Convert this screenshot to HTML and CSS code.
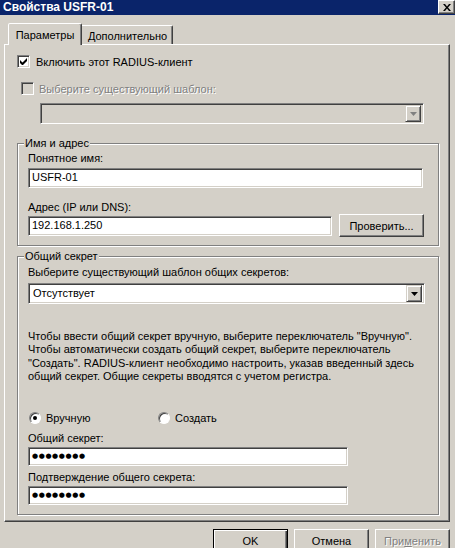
FILE: index.html
```html
<!DOCTYPE html>
<html lang="ru">
<head>
  <meta charset="UTF-8" />
  <title>Свойства USFR-01</title>
  <link rel="stylesheet" href="styles.css">
</head>
<body>
<div class="window">
  <div class="titlebar">
    <span class="title">Свойства USFR-01</span>
    <span class="close-btn">
      <svg width="8" height="7" viewBox="0 0 8 7"><path d="M0 0h2l2 2.5L6 0h2L5 3.5 8 7H6L4 4.5 2 7H0l3-3.5z" fill="#000"/></svg>
    </span>
  </div>
  <div class="content">
    <div class="tabs">
      <div class="tab active">Параметры</div>
      <div class="tab">Дополнительно</div>
    </div>
    <div class="panel">
      <div class="check-row">
        <span class="checkbox">
          <svg width="7" height="7" viewBox="0 0 7 7"><path d="M0 2v3l2 2h1l4-4V0L2.5 4.5z" fill="#000"/></svg>
        </span>
        Включить этот RADIUS-клиент
      </div>
      <div class="check-row disabled indent">
        <span class="checkbox off"></span>
        Выберите существующий шаблон:
      </div>
      <div class="combo combo-off">
        <span class="combo-text"></span>
        <span class="combo-arrow"><svg width="7" height="4" viewBox="0 0 7 4"><path d="M0 0h7L3.5 4z" fill="#808080"/></svg></span>
      </div>

      <div class="group group-name">
        <div class="legend"><span>Имя и адрес</span></div>
        <div class="field-label">Понятное имя:</div>
        <div class="textbox tb-name">USFR-01</div>
        <div class="field-label lbl-addr">Адрес (IP или DNS):</div>
        <div class="addr-row">
          <div class="textbox tb-addr">192.168.1.250</div>
          <div class="btn btn-check">Проверить...</div>
        </div>
      </div>

      <div class="group group-secret">
        <div class="legend"><span>Общий секрет</span></div>
        <div class="field-label">Выберите существующий шаблон общих секретов:</div>
        <div class="combo combo-secret">
          <span class="combo-text">Отсутствует</span>
          <span class="combo-arrow"><svg width="7" height="4" viewBox="0 0 7 4"><path d="M0 0h7L3.5 4z" fill="#000"/></svg></span>
        </div>
        <p class="hint">Чтобы ввести общий секрет вручную, выберите переключатель "Вручную".<br>Чтобы автоматически создать общий секрет, выберите переключатель<br>"Создать". RADIUS-клиент необходимо настроить, указав введенный здесь<br>общий секрет. Общие секреты вводятся с учетом регистра.</p>
        <div class="radio-row">
          <div class="radio-item first"><span class="radio checked"></span>Вручную</div>
          <div class="radio-item"><span class="radio"></span>Создать</div>
        </div>
        <div class="field-label lbl-secret">Общий секрет:</div>
        <div class="textbox tb-pass">●●●●●●●●</div>
        <div class="field-label lbl-confirm">Подтверждение общего секрета:</div>
        <div class="textbox tb-pass">●●●●●●●●</div>
      </div>
    </div>
    <div class="buttons">
      <div class="btn btn-default">OK</div>
      <div class="btn">Отмена</div>
      <div class="btn btn-off">При<u>м</u>енить</div>
    </div>
  </div>
</div>
</body>
</html>
```

FILE: styles.css
```css
:root { --face:#d4d0c8; --shadow:#808080; --dark:#404040; --light:#fff; --title:#0a246a; }
* { box-sizing: border-box; }
body { margin:0; background:var(--face); font-family:'Liberation Sans',Arial,sans-serif; font-size:11px; color:#000; overflow:hidden; }
.window { width:455px; height:548px; }

/* title bar */
.titlebar { height:15px; background:var(--title); display:flex; justify-content:space-between; align-items:flex-start; }
.title { color:#fff; font-weight:bold; font-size:12px; line-height:14px; padding-left:3px; }
.close-btn { width:17px; height:14px; background:var(--face); display:flex; align-items:center; justify-content:center;
  border:1px solid; border-color:var(--light) var(--dark) var(--dark) var(--light); box-shadow:inset -1px -1px var(--shadow); }

.content { padding:8px 5px 0 4px; }

/* tabs */
.tabs { display:flex; height:21px; margin-left:4px; }
.tab { background:var(--face); border:1px solid; border-bottom:none; border-color:var(--light) var(--dark) transparent var(--light);
  box-shadow:inset -1px 0 var(--shadow); border-radius:2px 2px 0 0; text-align:center; line-height:13px; }
.tab.active { width:74px; height:22px; padding-top:5px; position:relative; z-index:1; }
.tab:not(.active) { width:93px; height:19px; margin-top:2px; margin-left:-2px; padding-top:4px; padding-left:2px; }

/* panel */
.panel { width:446px; height:478px; padding:10px 0 0 12px; border:1px solid; border-color:var(--light) var(--dark) var(--dark) var(--light);
  box-shadow:inset -1px -1px var(--shadow); }

.check-row { display:flex; align-items:center; gap:6px; height:13px; white-space:nowrap; }
.check-row.indent { margin-top:14px; padding-left:4px; gap:5px; }
.check-row.disabled { color:var(--shadow); text-shadow:1px 1px var(--light); }
.checkbox { width:13px; height:13px; flex:none; background:#fff; display:flex; align-items:center; justify-content:center;
  border:1px solid; border-color:var(--shadow) var(--light) var(--light) var(--shadow); box-shadow:inset 1px 1px var(--dark), inset -1px -1px var(--face); }
.checkbox.off { background:var(--face); }

/* combo boxes */
.combo { height:21px; display:flex; align-items:center; justify-content:space-between; background:#fff; padding:2px;
  border:1px solid; border-color:var(--shadow) var(--light) var(--light) var(--shadow); box-shadow:inset 1px 1px var(--dark), inset -1px -1px var(--face); }
.combo-off { width:384px; margin:8px 0 0 23px; background:var(--face); }
.combo-secret { width:397px; margin-top:4px; }
.combo-text { padding-left:2px; line-height:15px; }
.combo-arrow { width:16px; height:17px; background:var(--face); display:flex; align-items:center; justify-content:center;
  border:1px solid; border-color:var(--face) var(--dark) var(--dark) var(--face); box-shadow:inset 1px 1px var(--light), inset -1px -1px var(--shadow); }

/* group boxes */
.group { width:422px; padding:0 10px 8px; border:1px solid var(--shadow); box-shadow:1px 1px var(--light), inset 1px 1px var(--light); }
.group-name { margin-top:19px; }
.group-secret { margin-top:10px; padding-bottom:9px; }
.legend { margin:-7px 0 0 -4px; line-height:13px; height:13px; }
.legend span { background:var(--face); padding:0 1px; }

.field-label { line-height:13px; margin-top:2px; white-space:nowrap; }
.group-secret .field-label { margin-top:3px; }
.lbl-addr { margin-top:13px; }
.group-secret .lbl-secret { margin-top:7px; }
.group-secret .lbl-confirm { margin-top:5px; }

.textbox { height:20px; background:#fff; padding:0 3px; line-height:17px; margin-top:3px; white-space:nowrap;
  border:1px solid; border-color:var(--shadow) var(--light) var(--light) var(--shadow); box-shadow:inset 1px 1px var(--dark), inset -1px -1px var(--face); }
.tb-name { width:395px; }
.addr-row { display:flex; align-items:center; gap:7px; }
.tb-addr { width:304px; margin-top:0; }
.tb-pass { width:320px; height:19px; margin-top:2px; font-family:'DejaVu Sans',sans-serif; font-size:7px; letter-spacing:0.6px; line-height:17px; }

.hint { margin:26px 0 0; line-height:13.4px; white-space:nowrap; }

/* radios */
.radio-row { display:flex; align-items:center; height:13px; margin-top:28px; }
.radio-item { display:flex; align-items:center; gap:5px; }
.radio-item.first { width:130px; padding-left:1px; }
.radio { width:12px; height:12px; border-radius:50%; background:#fff; display:flex; align-items:center; justify-content:center;
  border:1px solid; border-color:var(--shadow) var(--light) var(--light) var(--shadow); box-shadow:inset 1px 1px var(--dark); }
.radio.checked::after { content:''; width:4px; height:4px; border-radius:50%; background:#000; }

/* buttons */
.btn { width:75px; height:23px; display:flex; align-items:center; justify-content:center; background:var(--face);
  border:1px solid; border-color:var(--light) var(--dark) var(--dark) var(--light); box-shadow:inset -1px -1px var(--shadow); }
.btn-check { width:85px; }
.buttons { display:flex; justify-content:flex-end; gap:6px; margin-top:7px; }
.btn-default { border:1px solid #000; box-shadow:inset 1px 1px var(--light), inset -1px -1px var(--dark), inset -2px -2px var(--shadow); }
.btn-off { color:var(--shadow); text-shadow:1px 1px var(--light); }
```
